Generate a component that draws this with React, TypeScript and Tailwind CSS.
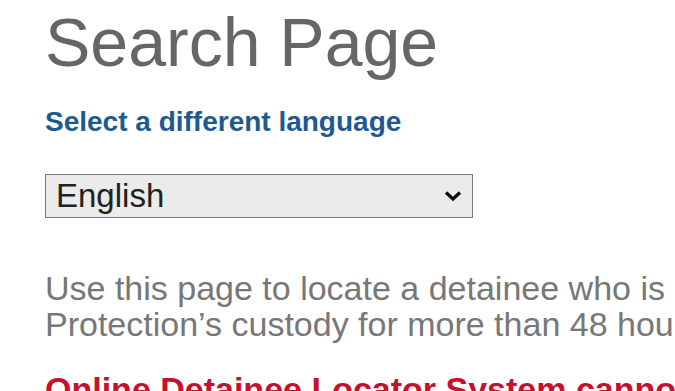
import React from "react";

export default function App() {
  return (
    <div className="h-[391px] w-[675px] overflow-hidden bg-white font-['Liberation_Sans',Arial,sans-serif]">
      <div className="w-[1600px] pl-[45px] pt-[8px]">
        {/* Page title */}
        <h1 className="text-[68px] leading-[68px] text-[#666666]">Search Page</h1>

        {/* Language picker */}
        <a href="#" className="mt-[30px] block text-[28px] font-bold leading-[32px] text-[#1d5a8f]">
          Select a different language
        </a>
        <div className="relative mt-[36px] w-[428px]">
          <select
            defaultValue="en"
            className="h-[44px] w-full appearance-none border border-[#7a7a7a] bg-[#ebebeb] pl-[10px] text-[33px] leading-[40px] text-[#222222] outline-none"
          >
            <option value="en">English</option>
            <option value="es">Español</option>
          </select>
          <svg
            className="pointer-events-none absolute right-[11px] top-[16px]"
            width="18"
            height="12"
            viewBox="0 0 18 12"
          >
            <path d="M2 2.5 L9 9 L16 2.5" fill="none" stroke="#111" strokeWidth="3.4" />
          </svg>
        </div>

        {/* Intro */}
        <p className="mt-[52px] whitespace-nowrap text-[34px] leading-[36px] text-[#777777]">
          Use this page to locate a detainee who is currently in U.S. Customs and Border
          <br />
          Protection’s custody for more than 48 hours.
        </p>
        <p className="mt-[27px] whitespace-nowrap text-[34px] font-bold leading-[40px] text-[#c8102e]">
          Online Detainee Locator System cannot be used to locate
        </p>
      </div>
    </div>
  );
}
